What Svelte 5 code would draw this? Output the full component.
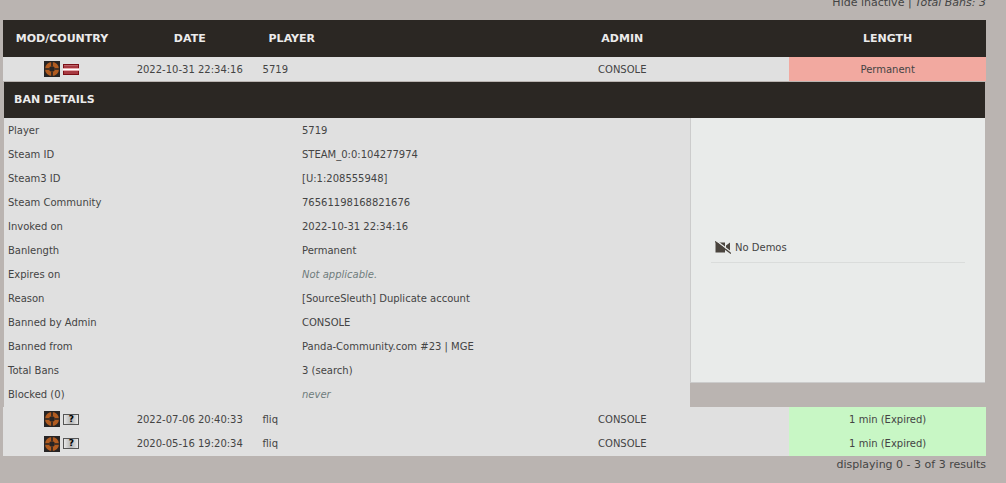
<script>
    let bans = [
        { date: "2022-10-31 22:34:16", player: "5719", admin: "CONSOLE", length: "Permanent", country: "lv", state: "permanent" },
        { date: "2022-07-06 20:40:33", player: "fliq", admin: "CONSOLE", length: "1 min (Expired)", country: "unknown", state: "expired" },
        { date: "2020-05-16 19:20:34", player: "fliq", admin: "CONSOLE", length: "1 min (Expired)", country: "unknown", state: "expired" }
    ];

    let details = [
        { label: "Player", value: "5719" },
        { label: "Steam ID", value: "STEAM_0:0:104277974" },
        { label: "Steam3 ID", value: "[U:1:208555948]" },
        { label: "Steam Community", value: "76561198168821676", href: "#community" },
        { label: "Invoked on", value: "2022-10-31 22:34:16" },
        { label: "Banlength", value: "Permanent" },
        { label: "Expires on", value: "Not applicable.", muted: true },
        { label: "Reason", value: "[SourceSleuth] Duplicate account" },
        { label: "Banned by Admin", value: "CONSOLE" },
        { label: "Banned from", value: "Panda-Community.com #23 | MGE" },
        { label: "Total Bans", value: "3", search: true },
        { label: "Blocked (0)", value: "never", muted: true }
    ];

    let opened = 0; // índice del ban desplegado

    function toggle(index) {
        opened = opened === index ? -1 : index;
    }
</script>

<main>
    <div class="top-bar">
        <a href="#hide">Hide inactive</a> | <em>Total Bans: {bans.length}</em>
    </div>

    <table class="bans">
        <colgroup>
            <col class="col-mod" />
            <col class="col-date" />
            <col class="col-player" />
            <col class="col-admin" />
            <col class="col-length" />
        </colgroup>
        <thead>
            <tr>
                <th>MOD/COUNTRY</th>
                <th>DATE</th>
                <th class="player">PLAYER</th>
                <th>ADMIN</th>
                <th>LENGTH</th>
            </tr>
        </thead>
        <tbody>
            {#each bans as ban, index}
                <tr class="ban" on:click={() => toggle(index)}>
                    <td>
                        <div class="icons">
                            <svg width="16" height="16" viewBox="0 0 16 16">
                                <rect width="16" height="16" fill="#272424" />
                                <circle cx="8" cy="8" r="7" fill="#b25c20" />
                                <path d="M7.2 0h1.6v5h-1.6zM11 7.2h5v1.6h-5zM7.2 11h1.6v5h-1.6zM0 7.2h5v1.6h-5z" fill="#272424" />
                                <circle cx="8" cy="8" r="2.8" fill="#272424" />
                            </svg>
                            {#if ban.country === "lv"}
                                <svg width="16" height="11" viewBox="0 0 16 11">
                                    <rect width="16" height="11" fill="#7c0f16" />
                                    <rect x="1" y="1" width="14" height="9" fill="#a83a42" />
                                    <rect x="1" y="1" width="14" height="1" fill="#bd656b" />
                                    <rect y="4" width="16" height="3" fill="#e6a9ac" />
                                    <rect y="5" width="16" height="1" fill="#fff" />
                                </svg>
                            {:else}
                                <span class="unknown-flag">?</span>
                            {/if}
                        </div>
                    </td>
                    <td>{ban.date}</td>
                    <td class="player">{ban.player}</td>
                    <td>{ban.admin}</td>
                    <td class={ban.state}>{ban.length}</td>
                </tr>
                {#if opened === index}
                    <tr>
                        <td colspan="5" class="opened">
                            <h3>BAN DETAILS</h3>
                            <div class="details">
                                <table class="info">
                                    <tbody>
                                        {#each details as row}
                                            <tr>
                                                <th>{row.label}</th>
                                                <td class:muted={row.muted}>
                                                    {#if row.href}
                                                        <a href={row.href}>{row.value}</a>
                                                    {:else if row.search}
                                                        {row.value} <a href="#search">(search)</a>
                                                    {:else}
                                                        {row.value}
                                                    {/if}
                                                </td>
                                            </tr>
                                        {/each}
                                    </tbody>
                                </table>
                                <div class="side">
                                    <div class="demo">
                                        <svg width="16" height="13" viewBox="0 0 16 13">
                                            <path d="M0.5 1.5h9.5v10h-9.5zM11 4.5l4-3v10l-4-3z" fill="#4a443e" />
                                            <path d="M1 -0.5l15.5 12" stroke="#e9ebea" stroke-width="1.5" />
                                            <path d="M0 0.5l16 12" stroke="#4a443e" stroke-width="1.3" />
                                        </svg>
                                        No Demos
                                    </div>
                                </div>
                            </div>
                        </td>
                    </tr>
                {/if}
            {/each}
        </tbody>
    </table>

    <div class="footer">displaying 0 - 3 of 3 results</div>
</main>

<style>
    :global(body) {
        background: #bab4b1;
    }

    main {
        margin: -4px 20px 0 3px;
        font-family: Verdana, "DejaVu Sans", sans-serif;
        font-size: 10px;
        color: #444;
    }

    a {
        color: inherit;
        text-decoration: none;
    }

    .top-bar {
        padding-bottom: 10px;
        font-size: 11px;
        line-height: 14px;
        text-align: right;
    }

    table {
        border-collapse: collapse;
        border-spacing: 0;
    }

    td, th {
        padding: 0 4px;
    }

    .bans {
        width: 100%;
        table-layout: fixed;
        text-align: center;
    }

    .bans thead th {
        height: 37px;
        background: #2b2723;
        color: #ebebeb;
        font-size: 11px;
    }

    .col-mod { width: 12%; }
    .col-date { width: 14%; }
    .col-player { width: 20%; }
    .col-admin { width: 34%; }
    .col-length { width: 20%; }

    .bans .player {
        text-align: left;
    }

    .bans th.player {
        padding: 0 10px;
    }

    .ban {
        cursor: pointer;
    }

    .ban td {
        height: 24px;
        background: #e0e0e0;
    }

    .ban:last-child td {
        height: 25px;
    }

    .ban .permanent {
        background: #f2a9a0;
    }

    .ban .expired {
        background: #c8f7c5;
    }

    .icons {
        display: flex;
        justify-content: center;
        align-items: center;
        gap: 3px;
    }

    .unknown-flag {
        box-sizing: border-box;
        width: 16px;
        height: 11px;
        border: 1px solid #555;
        background: linear-gradient(90deg, #e8e8e8, #b4b4b4, #e8e8e8);
        color: #000;
        font-size: 9px;
        font-weight: bold;
        line-height: 9px;
    }

    .bans .opened {
        padding: 1px 1px 0;
        text-align: left;
    }

    h3 {
        margin: 0;
        padding: 0 10px;
        background: #2b2723;
        color: #ebebeb;
        font-size: 11px;
        line-height: 36px;
    }

    .details {
        display: flex;
        align-items: flex-start;
    }

    .info {
        flex: 1;
        background: #e0e0e0;
        border-bottom: 1px solid #e0e0e0;
    }

    .info th, .info td {
        height: 24px;
        font-weight: normal;
        text-align: left;
    }

    .info th {
        width: 42%;
    }

    .info td {
        width: 56%;
    }

    .info .muted {
        color: #6f7c7c;
        font-style: italic;
    }

    .side {
        box-sizing: border-box;
        display: flex;
        flex: 0 0 295px;
        align-items: center;
        min-height: 265px;
        padding: 0 20px 4px;
        background: #e9ebea;
        border-left: 1px solid #ccc;
        border-bottom: 1px solid #ccc;
    }

    .demo {
        display: flex;
        flex: 1;
        align-items: center;
        gap: 4px;
        padding: 0 4px;
        border-bottom: 1px solid #dadcdb;
        line-height: 28px;
    }

    .footer {
        padding-top: 2px;
        font-size: 11px;
        line-height: 14px;
        text-align: right;
    }
</style>
